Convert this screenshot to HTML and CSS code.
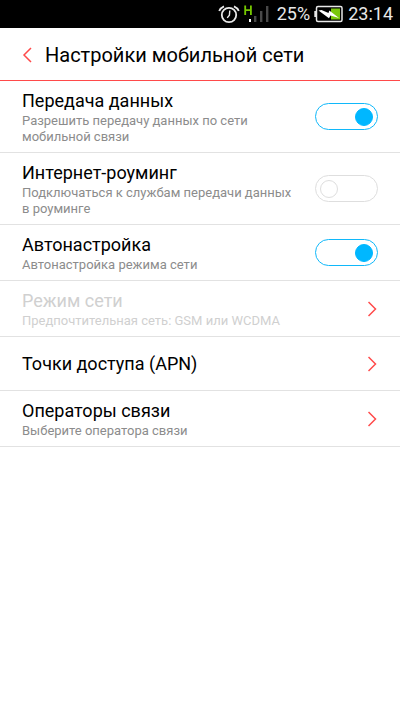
FILE: index.html
```html
<!DOCTYPE html>
<html lang="ru">
<head>
<meta charset="utf-8">
<meta name="viewport" content="width=device-width, initial-scale=1">
<title>Настройки мобильной сети</title>
<link rel="stylesheet" href="styles.css">
</head>
<body>
<div class="status">
  <svg class="status-alarm" width="22" height="20" viewBox="0 0 22 20" fill="none" stroke="#e8e8e8" aria-hidden="true">
    <circle cx="11" cy="11" r="7.2" stroke-width="1.8"/>
    <path d="M11.8 6.500l-.4 4.800-2.200 2.600" stroke-width="1.4"/>
    <path d="M1.200 7Q2.500 3.800 6 2.300M20.800 7Q19.500 3.800 16 2.300" stroke-width="1.800"/>
  </svg>
  <svg class="status-signal" width="25" height="20" viewBox="0 0 25 20" aria-hidden="true">
    <path d="M1.200 1.500v9.500M6.900 1.500v9.500M1.200 6.200h5.700" fill="none" stroke="#76c800" stroke-width="1.800"/>
    <path d="M5 15h2v3H5z" fill="#fff"/>
    <path d="M10 12h2.400v6H10zM16 7h2.400v11H16zM22 2h2.400v16H22z" fill="#484848"/>
  </svg>
  <span class="status-percent">25%</span>
  <svg class="status-battery" width="29" height="20" viewBox="0 0 29 20" aria-hidden="true">
    <path d="M17 4.500h9v11h-9z" fill="#7ac70c"/>
    <rect x="2.500" y="2.500" width="25.500" height="15" rx="1.500" fill="none" stroke="#e8e8e8" stroke-width="1.500"/>
    <path d="M.3 7h2v6h-2z" fill="#e8e8e8"/>
    <path d="M4.500 6.500l3-.5 7 3 .8-2.500 9.700 7.500-8.500-2.500-1.500 2.700z" fill="#fff"/>
  </svg>
  <time class="status-time">23:14</time>
</div>
<header class="header">
  <button class="back" type="button" aria-label="Назад">
    <svg width="10" height="16" viewBox="0 0 10 16"><path class="arrow" d="M9 1L2 8l7 7"/></svg>
  </button>
  <h1>Настройки мобильной сети</h1>
</header>
<main>
  <label class="row">
    <span class="text"><span class="title">Передача данных</span><span class="note">Разрешить передачу данных по сети мобильной связи</span></span>
    <input class="toggle" type="checkbox" checked>
  </label>
  <label class="row">
    <span class="text"><span class="title">Интернет-роуминг</span><span class="note">Подключаться к службам передачи данных в роуминге</span></span>
    <input class="toggle" type="checkbox">
  </label>
  <label class="row">
    <span class="text"><span class="title">Автонастройка</span><span class="note">Автонастройка режима сети</span></span>
    <input class="toggle" type="checkbox" checked>
  </label>
  <button class="row" type="button" disabled>
    <span class="text"><span class="title">Режим сети</span><span class="note">Предпочтительная сеть: GSM или WCDMA</span></span>
    <svg class="next" width="10" height="16" viewBox="0 0 10 16"><path class="arrow" d="M.5 1l7 7-7 7"/></svg>
  </button>
  <button class="row row-single" type="button">
    <span class="text"><span class="title">Точки доступа (APN)</span></span>
    <svg class="next" width="10" height="16" viewBox="0 0 10 16"><path class="arrow" d="M.5 1l7 7-7 7"/></svg>
  </button>
  <button class="row" type="button">
    <span class="text"><span class="title">Операторы связи</span><span class="note">Выберите оператора связи</span></span>
    <svg class="next" width="10" height="16" viewBox="0 0 10 16"><path class="arrow" d="M.5 1l7 7-7 7"/></svg>
  </button>
</main>
</body>
</html>
```
FILE: styles.css
```css
* {
  box-sizing: border-box;
}

body {
  margin: 0;
  background: #fff;
  color: #000;
  font-family: Roboto, "Noto Sans", sans-serif;
}

svg {
  display: block;
  flex: none;
}

.status {
  display: flex;
  align-items: center;
  justify-content: flex-end;
  padding: 0 7px;
  background: #000;
  color: #e8e8e8;
  font-size: 18px;
  line-height: 28px;
}

.status-signal {
  margin-left: 4px;
}

.status-percent {
  margin-left: 8px;
}

.status-battery {
  margin-left: 4px;
}

.status-time {
  margin-left: 5px;
}

.header {
  display: flex;
  align-items: center;
  padding: 14px 22px 12px;
  border-bottom: 1px solid #ff4a4a;
}

.back {
  margin: 0 13px 0 0;
  padding: 0;
  border: 0;
  background: none;
}

h1 {
  margin: 0;
  font-size: 20px;
  font-weight: 400;
  line-height: 26px;
}

.arrow {
  fill: none;
  stroke: #ff4a4a;
  stroke-width: 1.5;
}

.row {
  display: flex;
  align-items: center;
  justify-content: space-between;
  gap: 20px;
  width: 100%;
  padding: 7px 22px;
  border: 0;
  border-bottom: 1px solid #e2e2e2;
  background: none;
  color: #000;
  font: inherit;
  text-align: left;
}

.row-single {
  padding: 14px 22px;
}

.text {
  flex: 1;
  min-width: 0;
  padding-top: 1px;
}

.title,
.note {
  display: block;
}

.title {
  font-size: 18px;
  line-height: 24px;
}

.note {
  color: #8c8c8c;
  font-size: 13px;
  line-height: 16px;
}

.row:disabled .title,
.row:disabled .note {
  color: #d0d0d0;
}

.toggle {
  display: flex;
  flex: none;
  align-items: center;
  appearance: none;
  width: 63px;
  height: 27px;
  margin: 0;
  padding: 0 4px;
  border: 1px solid #dedede;
  border-radius: 14px;
}

.toggle::before {
  content: "";
  width: 16px;
  height: 16px;
  border: 1px solid #dedede;
  border-radius: 50%;
}

.toggle:checked {
  justify-content: flex-end;
  border-color: #10b8fa;
}

.toggle:checked::before {
  border-color: #00b7ff;
  background: #00b7ff;
}
```
